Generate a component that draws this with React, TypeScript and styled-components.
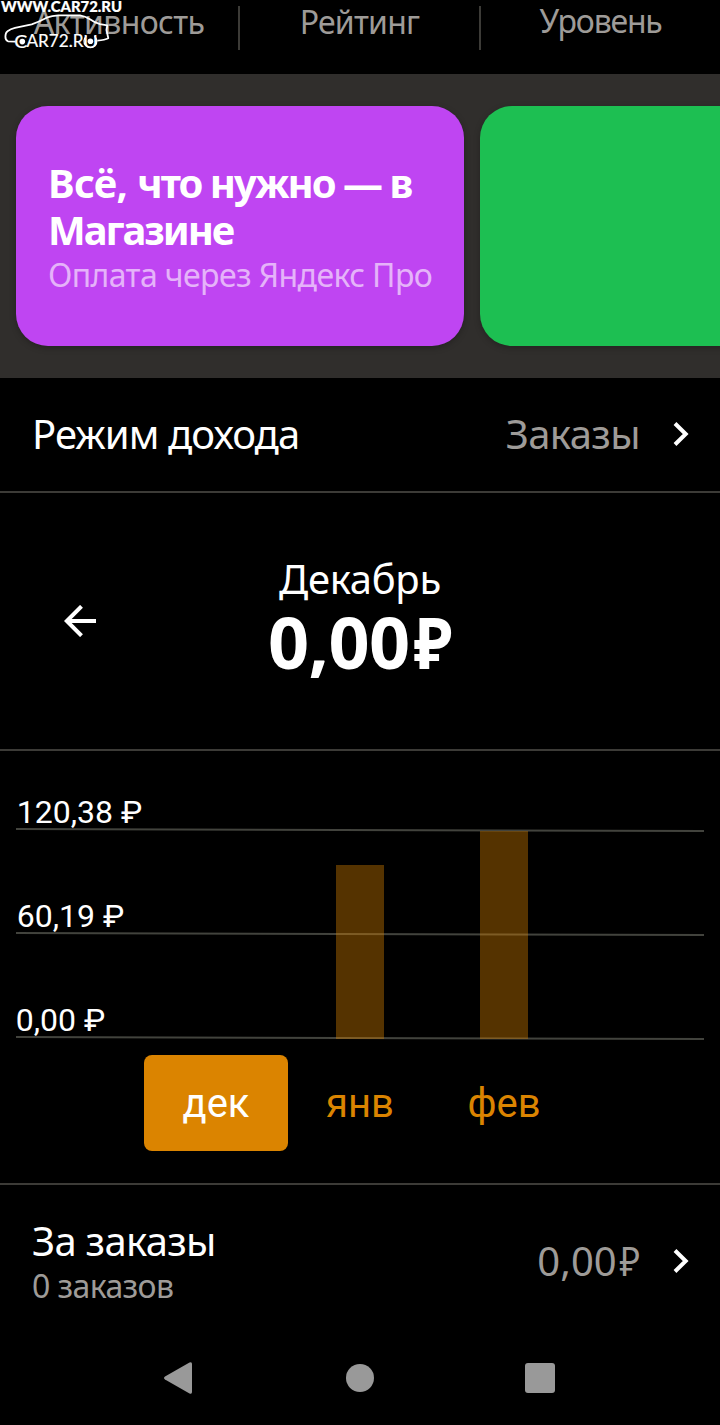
import React from 'react';
import styled, { createGlobalStyle } from 'styled-components';

const GlobalStyle = createGlobalStyle`
  body { margin: 0; background: #000; }
  * { box-sizing: border-box; }
`;

const Screen = styled.div`
  position: relative;
  width: 720px;
  height: 1425px;
  overflow: hidden;
  display: flex;
  flex-direction: column;
  background: #000;
  color: #fff;
  font-family: 'Noto Sans', sans-serif;
`;

const Stats = styled.header`
  height: 74px;
  flex: none;
  display: grid;
  grid-template-columns: 240px 241px 239px;
  padding-top: 6px;
`;

const Stat = styled.div<{ $divided?: boolean }>`
  height: 44px;
  border-right: ${p => (p.$divided ? '2px solid #3c3b37' : '0')};
  display: flex;
  justify-content: center;
`;

const Text = styled.span<{ $size: number; $line: number; $track?: number; $tone?: string; $bold?: boolean; $up?: number }>`
  display: block;
  white-space: nowrap;
  font-size: ${p => p.$size}px;
  line-height: ${p => p.$line}px;
  letter-spacing: ${p => p.$track ?? 0}px;
  color: ${p => p.$tone ?? '#fff'};
  font-weight: ${p => (p.$bold ? 700 : 400)};
  margin-top: ${p => -(p.$up ?? 0)}px;
`;

const Loose = styled.span`
  letter-spacing: -0.6px;
`;

const Ruble = styled.span`
  display: inline-block;
  transform: scaleX(0.89);
  transform-origin: right;
`;

const Promos = styled.section`
  height: 304px;
  flex: none;
  display: flex;
  gap: 16px;
  padding: 32px 16px;
  background: #302e2c;
  overflow: hidden;
`;

const Promo = styled.article<{ $fill: string }>`
  flex: none;
  width: 448px;
  height: 240px;
  padding: 53px 32px 0;
  border-radius: 32px;
  background: ${p => p.$fill};
  box-shadow: 0 2px 6px rgba(0, 0, 0, 0.25);
`;

const Row = styled.section<{ $height: number; $lift?: number }>`
  height: ${p => p.$height}px;
  flex: none;
  display: flex;
  align-items: center;
  justify-content: space-between;
  padding: 0 32px ${p => p.$lift ?? 0}px;
`;

const OrdersLabel = styled.div`
  padding-top: 2px;
`;

const Ruled = styled.div`
  flex: none;
  border-bottom: 2px solid #3c3b37;
`;

const Value = styled.div`
  display: flex;
  align-items: center;
  gap: 33px;
`;

const ChevronIcon = styled.svg`
  display: block;
  margin-right: -1px;
`;

const Period = styled.section`
  height: 256px;
  display: grid;
  grid-template-columns: 160px 400px 160px;
  align-items: center;
`;

const BackButton = styled.button`
  width: 32px;
  height: 32px;
  margin-left: 64px;
  padding: 0;
  border: 0;
  background: none;
  svg { display: block; }
`;

const PeriodTotal = styled.div`
  display: flex;
  flex-direction: column;
  align-items: center;
  padding-bottom: 8px;
`;

const Chart = styled.section`
  height: 432px;
  svg { display: block; }
`;

const Months = styled.div`
  display: flex;
  padding-left: 144px;
`;

const Month = styled.button<{ $active?: boolean }>`
  width: 144px;
  height: 96px;
  padding: 1px 0 0;
  border: 0;
  border-radius: 8px;
  background: ${p => (p.$active ? '#db8400' : 'transparent')};
  color: ${p => (p.$active ? '#fff' : '#db8400')};
  font: 400 40px/47px Roboto, sans-serif;
`;

const NavBar = styled.nav`
  flex: 1;
  padding-bottom: 6px;
  display: grid;
  grid-template-columns: repeat(3, 180px);
  justify-content: center;
  align-items: center;
  justify-items: center;
`;

const Watermark = styled.svg`
  position: absolute;
  left: 0;
  top: 0;
`;

const muted = '#9e9b98';

const Chevron = () => (
  <ChevronIcon width="16" height="26" viewBox="0 0 16 26">
    <path d="M2 2.5 12.7 13 2 23.5" fill="none" stroke="#fff" strokeWidth="4" />
  </ChevronIcon>
);

const levels = [
  { label: '120,38 ₽', y: 78, x: 16.8 },
  { label: '60,19 ₽', y: 182, x: 16.8 },
  { label: '0,00 ₽', y: 286, x: 15.8 },
];

export default function App() {
  return (
    <Screen>
      <GlobalStyle />
      <Stats>
        <Stat $divided><Text $size={32} $line={43} $track={-0.65} $tone={muted} $up={6}>Активность</Text></Stat>
        <Stat $divided><Text $size={32} $line={43} $track={-0.75} $tone={muted} $up={6}>Рейтинг</Text></Stat>
        <Stat><Text $size={32} $line={43} $track={-1.2} $tone={muted} $up={7}>Уровень</Text></Stat>
      </Stats>
      <Promos>
        <Promo $fill="#bf45f2">
          <Text $size={40} $line={47} $track={-1.98} $bold><Loose>Всё, </Loose>что нужно — в</Text>
          <Text $size={40} $line={47} $track={-2.05} $bold>Магазине</Text>
          <Text $size={32} $line={43} $track={-0.6} $tone="rgba(255,255,255,.6)">Оплата через Яндекс Про</Text>
        </Promo>
        <Promo $fill="#1dbf52" />
      </Promos>
      <Ruled>
        <Row $height={113} $lift={1}>
          <Text $size={40} $line={48} $track={-0.9} $up={1}>Режим дохода</Text>
          <Value><Text $size={40} $line={48} $track={-0.6} $tone={muted} $up={1}>Заказы</Text><Chevron /></Value>
        </Row>
      </Ruled>
      <Ruled>
        <Period>
          <BackButton aria-label="Назад">
            <svg width="32" height="32" viewBox="0 0 32 32">
              <path d="M32 16H3M17.5 1.3 2.8 16l14.7 14.7" fill="none" stroke="#fff" strokeWidth="4" />
            </svg>
          </BackButton>
          <PeriodTotal>
            <Text $size={40} $line={48} $track={-0.3}>Декабрь</Text>
            <Text $size={72} $line={77} $track={-0.7} $bold>0,00<Ruble>₽</Ruble></Text>
          </PeriodTotal>
        </Period>
      </Ruled>
      <Ruled>
        <Chart>
          <svg width="720" height="304" viewBox="0 0 720 304">
            {levels.map(l => (
              <g key={l.label}>
                <path d={`M16 ${l.y}L704 ${l.y + 2}`} stroke="#42433d" strokeWidth="2" />
                <text x={l.x} y={l.y - 6} fill="#fff" fontFamily="Roboto, sans-serif" fontSize="32">{l.label}</text>
              </g>
            ))}
            <rect x="336" y="114" width="48" height="174" fill="#db8400" opacity=".39" />
            <rect x="480" y="80" width="48" height="208" fill="#db8400" opacity=".39" />
          </svg>
          <Months>
            <Month $active>дек</Month>
            <Month>янв</Month>
            <Month>фев</Month>
          </Months>
        </Chart>
      </Ruled>
      <Row $height={152}>
        <OrdersLabel>
          <Text $size={40} $line={47} $track={-0.7}>За заказы</Text>
          <Text $size={32} $line={43} $track={-0.6} $tone={muted}>0 заказов</Text>
        </OrdersLabel>
        <Value><Text $size={40} $line={48} $tone={muted} $up={1}>0,00<Ruble>₽</Ruble></Text><Chevron /></Value>
      </Row>
      <NavBar>
        <svg width="32" height="32" viewBox="0 0 32 32"><path d="M1 14.6 25.5.6Q28-.6 28 2V30Q28 32.6 25.5 31.4L1 17.4Q-1 16 1 14.6Z" fill="#999" /></svg>
        <svg width="28" height="28"><circle cx="14" cy="14" r="14" fill="#999" /></svg>
        <svg width="30" height="30"><rect width="30" height="30" rx="3" fill="#999" /></svg>
      </NavBar>
      <Watermark width="128" height="54" viewBox="0 0 128 54">
        <text x="1" y="12" fill="#fff" stroke="#fff" strokeWidth=".2" fontFamily="Lato, sans-serif" fontWeight="900" fontSize="15" textLength="121" lengthAdjust="spacingAndGlyphs">WWW.CAR72.RU</text>
        <path
          d="M15.5 41.7 8 41.3Q5.3 40 5.4 36.5 5.5 32.5 7.5 31.2 10.5 28.8 15 27.8L31.7 24.3Q39.5 21.5 46.7 17.7 52 15.5 58.3 15.3L80 15.3Q85 16 90 19.3 95 23 100 24.2L107.3 25.3 106.5 30 108.3 38.3Q105 40 97.3 40.7"
          fill="none" stroke="#fff" strokeWidth="1.8" strokeLinejoin="round"
        />
        <g fill="#fff" stroke="#fff" strokeWidth=".2" fontFamily="Lato, sans-serif">
          <text x="14.300" y="47.700" fontSize="18" textLength="13" lengthAdjust="spacingAndGlyphs">C</text>
          <text x="26.500" y="47" fontSize="17" textLength="57" lengthAdjust="spacingAndGlyphs">AR72.R</text>
          <text x="83" y="47.700" fontSize="17" textLength="15" lengthAdjust="spacingAndGlyphs" strokeWidth="0">U</text>
        </g>
        <path d="M86.400 36.200A6.400 6.400 0 1 0 94.400 36.200" fill="none" stroke="#fff" strokeWidth="1.300" />
        <circle cx="22.300" cy="41.600" r="2.800" fill="#fff" />
        <circle cx="90.400" cy="41.200" r="2.800" fill="#fff" />
      </Watermark>
    </Screen>
  );
}
